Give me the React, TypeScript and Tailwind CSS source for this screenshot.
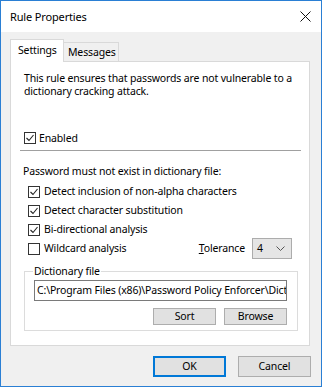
import React from "react"

const font = { fontFamily: '"Noto Sans", "Open Sans", sans-serif' }

const Check = ({ checked }: { checked: boolean }) => (
    <span className="w-[12px] h-[12px] border border-[#333333] bg-white flex items-center justify-center shrink-0">
        {checked && (
            <svg width="10" height="10" viewBox="0 0 10 10">
                <polyline points="1.5,5 4,7.5 8.5,2" fill="none" stroke="#222" strokeWidth="1.1" />
            </svg>
        )}
    </span>
)

const CheckRow = ({ label, checked }: { label: string; checked: boolean }) => (
    <div className="h-[19px] flex items-center gap-[4px]">
        <Check checked={checked} />
        <span>{label}</span>
    </div>
)

const Button = ({ children, primary }: { children: React.ReactNode; primary?: boolean }) => (
    <button
        className={
            primary
                ? "w-[73px] h-[21px] bg-[#e1e1e1] border-2 border-[#0078d7] flex items-center justify-center"
                : "w-[73px] h-[21px] bg-[#e1e1e1] border border-[#adadad] flex items-center justify-center"
        }
    >
        {children}
    </button>
)

export default function App() {
    return (
        <div className="w-[322px] h-[387px] border border-[#2a7fd4] flex flex-col text-[10.5px] tracking-[-0.15px] leading-[13px] text-black bg-[#f0f0f0]" style={font}>
            <div className="h-[31px] bg-white flex items-center justify-between pl-[9px] pr-[10px] shrink-0">
                <span className="text-[11px]">Rule Properties</span>
                <svg width="11" height="11" viewBox="0 0 11 11">
                    <path d="M0.5 0.5 L10.5 10.5 M10.5 0.5 L0.5 10.5" stroke="#111" strokeWidth="1" />
                </svg>
            </div>

            <div className="flex flex-col px-[9px] pt-[7px]">
                <div className="flex items-end h-[22px]">
                    <div className="w-[54px] h-[23px] bg-white border border-[#d9d9d9] border-b-0 relative z-10 -mb-px pl-[7px] pt-[4px]">Settings</div>
                    <div className="w-[55px] h-[19px] bg-[#f0f0f0] border border-[#d9d9d9] border-l-0 border-b-0 pl-[4px] pt-[3px]">Messages</div>
                </div>

                <div className="w-[300px] h-[285px] bg-white border border-[#d9d9d9] flex flex-col">
                    <p className="mt-[10px] ml-[13px] w-[280px]">
                        This rule ensures that passwords are not vulnerable to a dictionary cracking attack.
                    </p>

                    <div className="mt-[33px] ml-[13px] h-[14px] flex items-center gap-[3px]">
                        <Check checked={true} />
                        <span>Enabled</span>
                    </div>

                    <div className="mt-[5px] ml-[9px] w-[281px] h-px bg-[#a0a0a0]" />

                    <div className="mt-[14px] ml-[12px] h-[13px]">Password must not exist in dictionary file:</div>

                    <div className="mt-[4px] ml-[17px] flex flex-col">
                        <CheckRow label="Detect inclusion of non-alpha characters" checked={true} />
                        <CheckRow label="Detect character substitution" checked={true} />
                        <CheckRow label="Bi-directional analysis" checked={true} />
                        <div className="h-[19px] flex items-center">
                            <Check checked={false} />
                            <span className="ml-[4px]">Wildcard analysis</span>
                            <span className="ml-auto"><span className="underline">T</span>olerance</span>
                            <div className="ml-[7px] mr-[17px] w-[40px] h-[21px] bg-[#e5e5e5] border border-[#acacac] flex items-center justify-between pl-[4px] pr-[6px]">
                                <span>4</span>
                                <svg width="9" height="6" viewBox="0 0 9 6">
                                    <polyline points="0.5,0.5 4.5,4.5 8.5,0.5" fill="none" stroke="#555" strokeWidth="1" />
                                </svg>
                            </div>
                        </div>
                    </div>

                    <fieldset className="mt-[7px] ml-[13px] w-[274px] border border-[#dcdcdc] pb-[5px]">
                        <legend className="ml-[8px] px-[1px] leading-[13px]">Dictionary file</legend>
                        <div className="mt-[2px] ml-[9px] w-[253px] h-[21px] border border-[#7a7a7a] bg-white flex items-center pl-[2px] overflow-hidden whitespace-nowrap">
                            C:\Program Files (x86)\Password Policy Enforcer\Dictionary.txt
                        </div>
                        <div className="mt-[7px] ml-[128px] flex gap-[8px]">
                            <button className="w-[63px] h-[17px] bg-[#e1e1e1] border border-[#adadad] flex items-center justify-center">Sort</button>
                            <button className="w-[63px] h-[17px] bg-[#e1e1e1] border border-[#adadad] flex items-center justify-center">Browse</button>
                        </div>
                    </fieldset>
                </div>

                <div className="mt-[10px] flex justify-end gap-[12px] pr-[1px]">
                    <Button primary>OK</Button>
                    <Button>Cancel</Button>
                </div>
            </div>
        </div>
    )
}
